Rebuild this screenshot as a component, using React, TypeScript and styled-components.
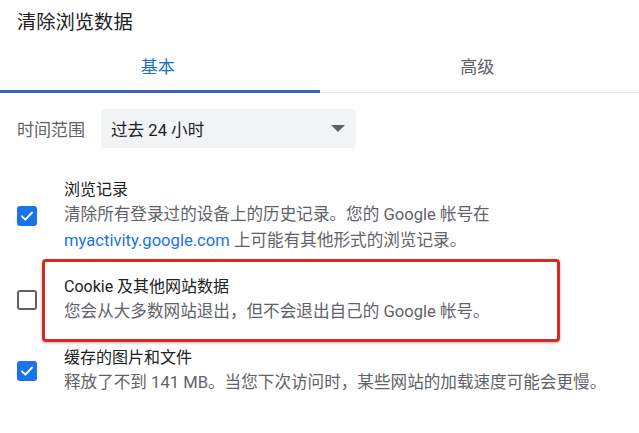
import React from "react";
import styled, { createGlobalStyle } from "styled-components";

const GlobalStyle = createGlobalStyle`
  html, body {
    margin: 0;
    padding: 0;
    background: #ffffff;
  }
  body {
    font-family: Roboto, "Noto Sans CJK SC", "Noto Sans", sans-serif;
    color: #202124;
    -webkit-font-smoothing: antialiased;
  }
`;

const Dialog = styled.div`
  width: 639px;
  height: 433px;
  overflow: hidden;
  background: #fff;
`;

const Header = styled.h1`
  margin: 0;
  height: 42px;
  padding-left: 17px;
  display: flex;
  align-items: center;
  font-size: 19.3px;
  font-weight: 400;
  color: #202124;
`;

const Tabs = styled.div`
  display: flex;
  height: 50px;
  border-bottom: 1px solid #e3e3e3;
`;

const Tab = styled.div<{ $active?: boolean }>`
  flex: 1;
  display: flex;
  align-items: center;
  justify-content: center;
  padding-bottom: 4px;
  padding-right: 4px;
  box-sizing: border-box;
  font-size: 17px;
  color: ${(p) => (p.$active ? "#1a6fc9" : "#5f6368")};
  box-shadow: ${(p) => (p.$active ? "inset 0 -3px 0 #3b62b5" : "none")};
  margin-bottom: -1px;
`;

const RangeRow = styled.div`
  display: flex;
  align-items: center;
  gap: 16px;
  padding-left: 17px;
  margin-top: 16px;
`;

const RangeLabel = styled.span`
  font-size: 17px;
  color: #5f6368;
`;

const Select = styled.div`
  width: 255px;
  height: 39px;
  box-sizing: border-box;
  display: flex;
  align-items: center;
  justify-content: space-between;
  padding: 0 10px 0 10px;
  background: #f1f3f4;
  border-radius: 4px;
  font-size: 16.6px;
  color: #202124;
`;

const Arrow = styled.span`
  width: 0;
  height: 0;
  border-left: 7px solid transparent;
  border-right: 7px solid transparent;
  border-top: 7px solid #5f6368;
  margin-right: 1px;
`;

const List = styled.div`
  display: flex;
  flex-direction: column;
  gap: 21px;
  margin-top: 30px;
`;

const Row = styled.div`
  position: relative;
  display: flex;
  align-items: center;
  gap: 27px;
  padding-left: 17px;
`;

const Box = styled.span<{ $checked?: boolean }>`
  flex: none;
  width: 20px;
  height: 20px;
  box-sizing: border-box;
  border-radius: 3px;
  display: flex;
  align-items: center;
  justify-content: center;
  background: ${(p) => (p.$checked ? "#1a73e8" : "#fff")};
  border: ${(p) => (p.$checked ? "none" : "2px solid #5f6368")};
`;

const Text = styled.div`
  display: flex;
  flex-direction: column;
`;

const Title = styled.div`
  font-size: 16px;
  line-height: 24px;
  color: #202124;
`;

const Desc = styled.div`
  font-size: 16.6px;
  line-height: 26px;
  color: #5f6368;
`;

const Link = styled.span`
  color: #1a73e8;
`;

const Highlight = styled.div`
  position: absolute;
  left: 42px;
  width: 518px;
  top: -16px;
  bottom: -17px;
  box-sizing: border-box;
  border: 3px solid #d42a24;
  border-radius: 4px;
  box-shadow: 0 1px 3px rgba(120, 0, 0, 0.35);
  pointer-events: none;
`;

function Checkbox({ checked }: { checked?: boolean }) {
  return (
    <Box $checked={checked}>
      {checked && (
        <svg width="16" height="16" viewBox="0 0 24 24" fill="none">
          <path d="M4.5 12.5l5 5L19.5 7" stroke="#fff" strokeWidth="3" strokeLinecap="round" strokeLinejoin="round" />
        </svg>
      )}
    </Box>
  );
}

export default function App() {
  return (
    <Dialog>
      <GlobalStyle />
      <Header>清除浏览数据</Header>
      <Tabs>
        <Tab $active>基本</Tab>
        <Tab>高级</Tab>
      </Tabs>
      <RangeRow>
        <RangeLabel>时间范围</RangeLabel>
        <Select>
          <span>过去 24 小时</span>
          <Arrow />
        </Select>
      </RangeRow>
      <List>
        <Row>
          <Checkbox checked />
          <Text>
            <Title>浏览记录</Title>
            <Desc>
              清除所有登录过的设备上的历史记录。您的 Google 帐号在
              <br />
              <Link>myactivity.google.com</Link> 上可能有其他形式的浏览记录。
            </Desc>
          </Text>
        </Row>
        <Row>
          <Checkbox />
          <Text>
            <Title>Cookie 及其他网站数据</Title>
            <Desc>您会从大多数网站退出，但不会退出自己的 Google 帐号。</Desc>
          </Text>
          <Highlight />
        </Row>
        <Row>
          <Checkbox checked />
          <Text>
            <Title>缓存的图片和文件</Title>
            <Desc>释放了不到 141 MB。当您下次访问时，某些网站的加载速度可能会更慢。</Desc>
          </Text>
        </Row>
      </List>
    </Dialog>
  );
}
